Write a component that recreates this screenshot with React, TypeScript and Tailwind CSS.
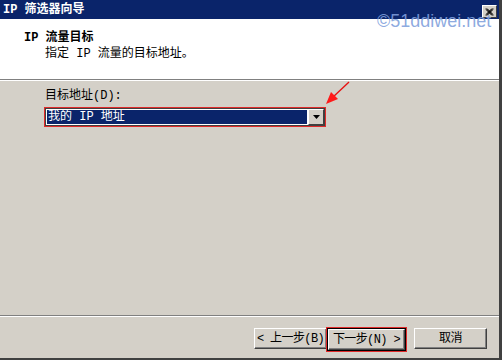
const font = "font-['Liberation_Mono','Noto_Sans_CJK_SC',monospace] text-[12px] leading-[14px]"

function WinButton({ label, isDefault }: { label: string; isDefault?: boolean }) {
  const face = (
    <div className="h-[21px] flex items-center justify-center whitespace-nowrap tracking-[-0.6px] bg-[#d4d0c8] border border-t-white border-l-white border-r-[#404040] border-b-[#404040] shadow-[inset_-1px_-1px_#808080] text-black">
      {label}
    </div>
  )
  if (isDefault) {
    return (
      <div className="w-[81px] border border-[#e02a2a]">
        <div className="border border-black">{face}</div>
      </div>
    )
  }
  return <div className="w-[73px]">{face}</div>
}

export default function App() {
  return (
    <div className={`relative w-[502px] h-[360px] bg-[#d4d0c8] flex flex-col border-r-[3px] border-r-[#404040] border-b-[2px] border-b-[#404040] overflow-hidden ${font}`}>
      {/* title bar */}
      <div className="h-[19px] shrink-0 bg-[#0a246a] flex items-start justify-between pl-[3px] pr-[2px]">
        <span className="text-white font-bold mt-[3px]">IP 筛选器向导</span>
        <div className="mt-[5px] w-[15px] h-[13px] bg-[#d4d0c8] border border-t-white border-l-white border-r-[#404040] border-b-[#404040] flex items-center justify-center">
          <svg width="9" height="8" viewBox="0 0 9 8">
            <path d="M1 0.5 L8 7.5 M2 0.5 L8 6.5 M1 1.5 L7 7.5 M8 0.5 L1 7.5 M7 0.5 L1 6.5 M8 1.5 L2 7.5" stroke="black" strokeWidth="1" />
          </svg>
        </div>
      </div>

      {/* header */}
      <div className="h-[60px] shrink-0 bg-white pt-[12px]">
        <div className="pl-[24px] font-bold text-black">IP 流量目标</div>
        <div className="pl-[45px] mt-[2px] text-black">指定 IP 流量的目标地址。</div>
      </div>
      <div className="shrink-0 border-t border-t-[#808080] border-b border-b-white" />

      {/* body */}
      <div className="relative flex-1 pt-[8px] pl-[44px]">
        <div className="pl-[1px] text-black">目标地址(D):</div>
        <div className="mt-[4px] w-[282px] h-[20px] border border-[#e02a2a] flex">
          <div className="flex-1 flex border border-[#404040] bg-white">
            <div className="flex-1 m-[1px] bg-[#0a246a] text-white flex items-center pl-[1px]">我的 IP 地址</div>
            <div className="w-[16px] bg-[#d4d0c8] border border-t-white border-l-white border-r-[#404040] border-b-[#404040] flex items-center justify-center">
              <svg width="7" height="4" viewBox="0 0 7 4">
                <path d="M0 0 H7 L3.5 4 Z" fill="black" />
              </svg>
            </div>
          </div>
        </div>
        <svg className="absolute left-[320px] top-0" width="35" height="30" viewBox="0 0 35 30">
          <path d="M29 1 L12 17" stroke="#e81010" strokeWidth="1.3" />
          <path d="M6 23 L11 11 L18 18 Z" fill="#ff1a1a" />
        </svg>
      </div>

      <div className="shrink-0 border-t border-t-[#808080] border-b border-b-white" />

      {/* buttons */}
      <div className="h-[41px] shrink-0 flex items-start pt-[10px] pl-[254px]">
        <div className="mt-[1px]">
          <WinButton label="< 上一步(B)" />
        </div>
        <div className="-ml-[1px]">
          <WinButton label="下一步(N) >" isDefault />
        </div>
        <div className="ml-[7px] mt-[1px]">
          <WinButton label="取消" />
        </div>
      </div>

      {/* watermark */}
      <div className="absolute left-[377px] top-[11px] font-['Liberation_Sans',sans-serif] text-[18px] leading-[20px] text-[#7f9fdc]/90">
        ©51ddiwei.net
      </div>
    </div>
  )
}
